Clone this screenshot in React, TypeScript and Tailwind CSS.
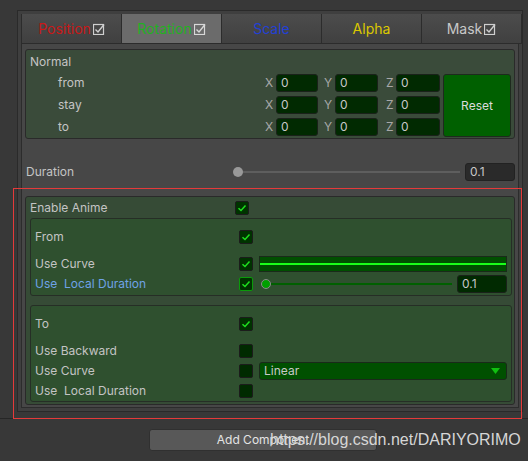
import React from 'react';

const base = 'text-[12px] leading-none whitespace-pre';
const label = `${base} text-[#c4c4c4]`;

const TabCheck: React.FC<{ color: string }> = ({ color }) => (
    <svg width="12" height="12" viewBox="0 0 12 12" className="ml-[2px]">
        <rect x="0.5" y="1.5" width="10" height="10" fill="none" stroke={color} strokeWidth="1.2" />
        <path d="M2.5 6.5 L5 9 L11 1.5" fill="none" stroke={color} strokeWidth="1.4" />
    </svg>
);

const Tab: React.FC<{ text: string; color: string; active?: boolean; check?: boolean }> = ({ text, color, active, check }) => (
    <div
        className={`w-[100px] h-[30px] flex items-center justify-center border-r border-b border-[#2c2c2c] ${
            active ? 'bg-[#6b6b6b]' : 'bg-gradient-to-b from-[#4c4c4c] to-[#404040]'
        }`}
    >
        <span className="text-[14px] leading-none" style={{ color }}>{text}</span>
        {check && <TabCheck color={active ? '#d8d8d8' : '#cfcfcf'} />}
    </div>
);

const Check: React.FC<{ checked?: boolean; focus?: boolean }> = ({ checked, focus }) => (
    <div
        className={`w-[14px] h-[14px] rounded-[2px] border flex items-center justify-center shrink-0 ${
            focus ? 'border-[#0a9a0a]' : 'border-[#1c1c1c]'
        } ${checked ? 'bg-[#003300]' : 'bg-[#002a00]'}`}
    >
        {checked && (
            <svg width="10" height="10" viewBox="0 0 10 10">
                <path d="M1.5 5.2 L4 7.5 L8.5 2.5" fill="none" stroke="#1ee01e" strokeWidth="1.5" />
            </svg>
        )}
    </div>
);

const Field: React.FC<{ w: string; value: string; dark?: boolean }> = ({ w, value, dark }) => (
    <div
        className={`${w} h-[18px] rounded-[3px] border flex items-center pl-[4px] ${
            dark ? 'bg-[#2a2a2a] border-[#222222]' : 'bg-[#012a01] border-[#1a221a]'
        }`}
    >
        <span className="text-[12px] text-[#c8c8c8] leading-none">{value}</span>
    </div>
);

const VecRow: React.FC<{ name: string }> = ({ name }) => (
    <div className="flex items-center h-[18px]">
        <span className={`${label} ml-[32px] w-[207px]`}>{name}</span>
        <span className={`${base} text-[#a8a8a8] w-[11px]`}>X</span>
        <Field w="w-[42px]" value="0" />
        <span className={`${base} text-[#a8a8a8] ml-[6px] w-[11px]`}>Y</span>
        <Field w="w-[43px]" value="0" />
        <span className={`${base} text-[#a8a8a8] ml-[8px] w-[10px]`}>Z</span>
        <Field w="w-[44px]" value="0" />
    </div>
);

const Slider: React.FC<{ w: string; knob: string; track: string }> = ({ w, knob, track }) => (
    <div className={`${w} h-[18px] relative`}>
        <div className={`absolute left-[5px] right-0 top-[8px] h-[2px] ${track}`} />
        <div className={`absolute left-0 top-[4px] w-[10px] h-[10px] rounded-full ${knob}`} />
    </div>
);

const App: React.FC = () => {
    return (
        <div className="w-[528px] h-[461px] bg-[#383838] relative overflow-hidden font-['Inter',sans-serif] flex flex-col">
            {/* Component panel */}
            <div className="mt-[10px] ml-[17px] w-[506px] border border-[#2a2a2a] bg-[#3f3f3f] pl-[3px] pt-[3px] pb-[3px]">
                {/* Tabs */}
                <div className="flex border-l border-[#2c2c2c]">
                    <Tab text="Position" color="#c81818" check />
                    <Tab text="Rotation" color="#22b022" check active />
                    <Tab text="Scale" color="#2240d4" />
                    <Tab text="Alpha" color="#dcc800" />
                    <Tab text="Mask" color="#c8c8c8" check />
                </div>

                {/* Inner panel */}
                <div className="w-[498px] border border-t-0 border-[#2c2c2c] bg-[#474747] pl-[3px] pt-[5px] pb-[2px]">
                    {/* Normal */}
                    <div className="w-[490px] h-[90px] border border-[#2a2a2a] rounded-[3px] bg-[#3a4b3a] flex flex-col">
                        <div className="h-[20px] mt-[2px] flex items-center pl-[4px]">
                            <span className={label}>Normal</span>
                        </div>
                        <div className="flex mt-[2px]">
                            <div className="flex flex-col gap-[4px]">
                                <VecRow name="from" />
                                <VecRow name="stay" />
                                <VecRow name="to" />
                            </div>
                            <div className="ml-[3px] w-[68px] h-[63px] rounded-[3px] border border-[#1e2a1e] bg-[#006000] flex items-center justify-center">
                                <span className="text-[12px] text-[#dcdcdc] leading-none">Reset</span>
                            </div>
                        </div>
                    </div>

                    {/* Duration */}
                    <div className="flex items-center h-[18px] mt-[24px] -ml-[3px]">
                        <span className={`${label} w-[211px] pl-[4px]`}>Duration</span>
                        <Slider w="w-[227px]" knob="bg-[#999999]" track="bg-[#5e5e5e]" />
                        <div className="ml-[5px]">
                            <Field w="w-[50px]" value="0.1" dark />
                        </div>
                    </div>

                    {/* Enable Anime */}
                    <div className="mt-[15px] w-[490px] border border-[#2a2a2a] rounded-[3px] bg-[#364b36] pb-[2px]">
                        <div className="h-[21px] flex items-center">
                            <span className={`${label} w-[209px] pl-[4px]`}>Enable Anime</span>
                            <Check checked />
                        </div>

                        {/* From */}
                        <div className="ml-[4px] w-[482px] border border-[#262e26] rounded-[3px] bg-[#2f502f] pt-[9px] pb-[2px]">
                            <div className="flex items-center h-[18px]">
                                <span className={`${label} w-[208px] pl-[4px]`}>From</span>
                                <Check checked />
                            </div>
                            <div className="flex items-center h-[16px] mt-[10px]">
                                <span className={`${label} w-[208px] pl-[4px]`}>Use Curve</span>
                                <Check checked />
                                <div className="ml-[6px] w-[248px] h-[16px] border border-[#1a2a1a] bg-[#004f00] flex items-center">
                                    <div className="w-full h-[2px] bg-[#1aff1a]" />
                                </div>
                            </div>
                            <div className="flex items-center h-[18px] mt-[3px]">
                                <span className={`${base} text-[#6ea2e6] w-[208px] pl-[4px]`}>Use  Local Duration</span>
                                <Check checked focus />
                                <div className="ml-[8px]">
                                    <Slider w="w-[191px]" knob="bg-[#00a000] border border-[#8a8a8a]" track="bg-[#006000]" />
                                </div>
                                <div className="ml-[5px]">
                                    <Field w="w-[50px]" value="0.1" />
                                </div>
                            </div>
                        </div>

                        {/* To */}
                        <div className="mt-[9px] ml-[4px] w-[482px] border border-[#262e26] rounded-[3px] bg-[#2f502f] pt-[9px] pb-[1px]">
                            <div className="flex items-center h-[18px]">
                                <span className={`${label} w-[208px] pl-[4px]`}>To</span>
                                <Check checked />
                            </div>
                            <div className="flex items-center h-[18px] mt-[9px]">
                                <span className={`${label} w-[208px] pl-[4px]`}>Use Backward</span>
                                <Check />
                            </div>
                            <div className="flex items-center h-[18px] mt-[2px]">
                                <span className={`${label} w-[208px] pl-[4px]`}>Use Curve</span>
                                <Check />
                                <div className="ml-[6px] w-[248px] h-[18px] rounded-[3px] border border-[#1a2a1a] bg-[#005000] flex items-center justify-between pl-[4px] pr-[6px]">
                                    <span className="text-[12px] text-[#c8c8c8] leading-none">Linear</span>
                                    <svg width="9" height="6" viewBox="0 0 9 6">
                                        <path d="M0 0 H9 L4.5 6 Z" fill="#10c010" />
                                    </svg>
                                </div>
                            </div>
                            <div className="flex items-center h-[18px] mt-[2px]">
                                <span className={`${label} w-[208px] pl-[4px]`}>Use  Local Duration</span>
                                <Check />
                            </div>
                        </div>
                    </div>
                </div>
            </div>

            {/* Footer */}
            <div className="mt-[6px] border-t border-[#262626] flex-1 flex pt-[10px] pl-[149px]">
                <div className="w-[228px] h-[22px] rounded-[3px] border border-[#303030] bg-[#585858] flex items-center justify-center">
                    <span className="text-[12px] text-[#e4e4e4] leading-none">Add Component</span>
                </div>
            </div>

            {/* Selection highlight */}
            <div className="absolute left-[13px] top-[188px] w-[509px] h-[231px] border border-[#e53a3a] pointer-events-none" />

            {/* Watermark */}
            <div className="absolute left-[270px] top-[430px] text-[16px] leading-[20px] text-[#d6d6d6] font-['Liberation_Sans',Arial,sans-serif] whitespace-nowrap">
                https://blog.csdn.net/DARIYORIMO
            </div>
        </div>
    );
};

export default App;
